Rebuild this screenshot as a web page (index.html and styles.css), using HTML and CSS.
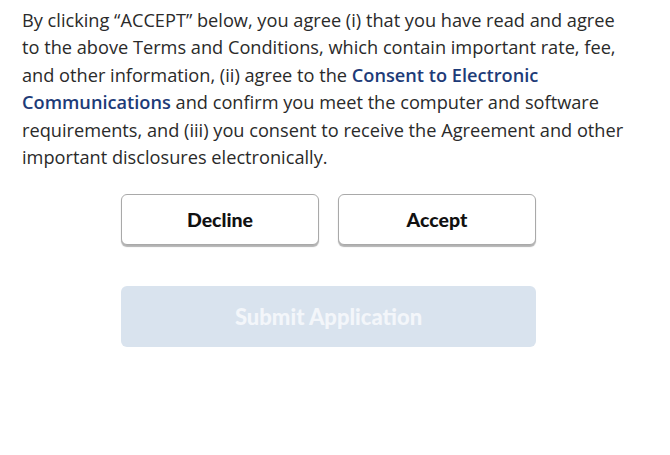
FILE: index.html
```html
<!DOCTYPE html>
<html lang="en">
<head>
    <meta charset="UTF-8">
    <meta name="viewport" content="width=device-width, initial-scale=1.0">
    <title>Accept Terms</title>
    <link rel="stylesheet" href="styles.css">
</head>
<body>
    <div class="terms">
        <p class="consent">
            By clicking “ACCEPT” below, you agree (i) that you have read and agree
            to the above Terms and Conditions, which contain important rate, fee,
            and other information, (ii) agree to the <a href="#">Consent to Electronic Communications</a>
            and confirm you meet the computer and software requirements, and (iii) you consent
            to receive the Agreement and other important disclosures electronically.
        </p>
        <div class="actions">
            <div class="choice">
                <button type="button" class="choice-btn">Decline</button>
                <button type="button" class="choice-btn">Accept</button>
            </div>
            <button type="button" class="submit-btn" disabled>Submit Application</button>
        </div>
    </div>
</body>
</html>
```

FILE: styles.css
```css
body {
    margin: 0;
    background-color: #ffffff;
    font-family: "Open Sans", Arial, sans-serif;
}
.terms {
    padding: 7px 22px;
    width: 604px;
}
.consent {
    margin: 0;
    font-size: 18.2px;
    line-height: 27.4px;
    color: #2a2a2a;
}
.consent a {
    color: #1d3b78;
    font-weight: 600;
    text-decoration: none;
}
.actions {
    width: 415px;
    margin: 23px 0 0 99px;
}
.choice {
    display: flex;
    gap: 19px;
}
.choice-btn {
    flex: 1;
    height: 51px;
    border: 1px solid #a9a9a9;
    border-radius: 6px;
    background-color: #ffffff;
    box-shadow: 0 2px 1px rgba(0, 0, 0, 0.3);
    font-family: Lato, Arial, sans-serif;
    font-weight: 900;
    font-size: 19.5px;
    color: #111111;
    cursor: pointer;
}
.submit-btn {
    display: block;
    width: 100%;
    height: 61px;
    margin-top: 41px;
    border: none;
    border-radius: 6px;
    background-color: #d9e3ee;
    font-family: Lato, Arial, sans-serif;
    font-weight: 900;
    font-size: 22px;
    color: #f3f6fa;
}
```
